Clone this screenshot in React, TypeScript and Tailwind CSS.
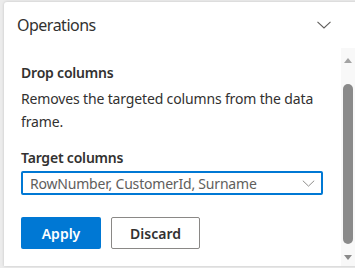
import React from 'react';

const font = { fontFamily: '"Segoe UI", "Noto Sans", sans-serif' };

const Chevron = ({ className }: { className?: string }) => (
  <svg viewBox="0 0 14 8" className={className} fill="none" stroke="currentColor" strokeWidth="1.1">
    <path d="M0.5 0.8 L7 7 L13.5 0.8" />
  </svg>
);

export default function App() {
  return (
    <div className="w-[355px] h-[268px] bg-[#ececec] overflow-hidden pl-[4px] pt-[2px]" style={font}>
      <div className="bg-white h-[264px] w-[360px] rounded-tl-[3px] shadow-[0_0_3px_rgba(0,0,0,0.18)] flex flex-col">
        <div className="h-[46px] flex items-center pl-[13px] pr-[24px] w-[351px]">
          <span className="text-[16px] tracking-[-0.5px] text-[#323130] flex-1">Operations</span>
          <Chevron className="w-[14px] h-[8px] text-[#605e5c]" />
        </div>
        <div className="flex flex-1 w-[351px]">
          <div className="flex-1 pl-[17px] pr-[18px] pt-[15px]">
            <div className="text-[14px] font-semibold tracking-[-0.2px] text-[#323130] leading-[20px]">Drop columns</div>
            <p className="text-[14px] tracking-[-0.15px] text-[#323130] leading-[23px] mt-[4px]">
              Removes the targeted columns from the data frame.
            </p>
            <div className="text-[14px] font-semibold tracking-[-0.2px] text-[#323130] leading-[20px] mt-[15px]">Target columns</div>
            <div className="mt-[3px] h-[24px] border-2 border-[#0078d4] rounded-[2px] flex items-center pl-[7px] pr-[6px]">
              <span className="flex-1 text-[14px] tracking-[-0.2px] text-[#605e5c] truncate">RowNumber, CustomerId, Surname</span>
              <Chevron className="w-[13px] h-[7px] text-[#8a8886]" />
            </div>
            <div className="flex gap-[10px] mt-[22px]">
              <button className="w-[80px] h-[32px] bg-[#0078d4] text-white text-[14px] font-semibold rounded-[2px]">
                Apply
              </button>
              <button className="w-[89px] h-[32px] bg-white border border-[#8a8886] text-[#323130] text-[14px] font-semibold rounded-[2px]">
                Discard
              </button>
            </div>
          </div>
          <div className="w-[14px] bg-[#f8f8f8] flex flex-col items-center pb-[4px]">
            <svg viewBox="0 0 8 5" className="w-[8px] h-[5px] mt-[10px] text-[#a3a3a3]" fill="currentColor">
              <path d="M4 0 L8 5 L0 5 Z" />
            </svg>
            <div className="w-[10px] flex-1 bg-[#8a8a8a] rounded-full mt-[21px] mb-[11px]" />
            <svg viewBox="0 0 8 5" className="w-[8px] h-[5px] mb-[2px] text-[#8a8a8a]" fill="currentColor">
              <path d="M0 0 L8 0 L4 5 Z" />
            </svg>
          </div>
        </div>
      </div>
    </div>
  );
}
